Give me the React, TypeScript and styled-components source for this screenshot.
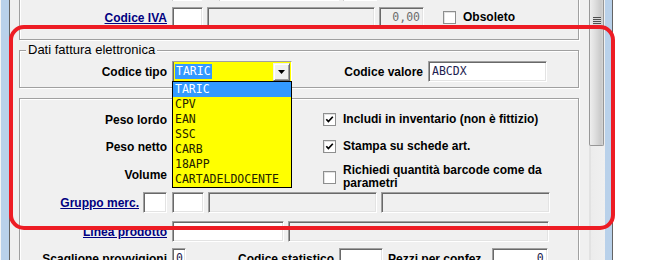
import React from "react";
import styled, { createGlobalStyle } from "styled-components";

const GlobalStyle = createGlobalStyle`
  html, body {
    margin: 0;
    padding: 0;
    background: #fff;
  }
  body {
    font-family: "Liberation Sans", Arial, sans-serif;
  }
`;

const mono = `"DejaVu Sans Mono", "Liberation Mono", monospace`;

const Screen = styled.div`
  position: relative;
  display: flex;
  width: 667px;
  height: 260px;
  overflow: hidden;
  background: #fff;
`;

const WindowEdge = styled.div`
  flex: 0 0 10px;
  box-sizing: border-box;
  background: #b9d1ea;
  border-left: 1px solid #f4f4f4;
  border-right: 1px solid #646464;
`;

const FormArea = styled.div`
  flex: 0 0 579px;
  box-sizing: border-box;
  padding: 0 10px 0 9px;
  background: #f0f0f0;
  display: flex;
  flex-direction: column;
  overflow: hidden;
`;

const GroupBox = styled.fieldset<{ $mt: number; $pt: number; $pb: number }>`
  flex-shrink: 0;
  min-width: 0;
  margin: ${(p) => p.$mt}px 0 0;
  padding: ${(p) => p.$pt}px 0 ${(p) => p.$pb}px;
  border: 1px solid #a0a0a0;
  box-shadow: inset 1px 1px 0 #fff, 1px 1px 0 #fff;
  display: flex;
  flex-direction: column;
  gap: 6px;
`;

const Legend = styled.legend`
  margin-left: 6px;
  padding: 0 2px;
  font-size: 13px;
  line-height: 14px;
  color: #000;
  background: #f0f0f0;
`;

const Row = styled.div<{ $h?: number; $gap?: number; $mb?: number }>`
  flex-shrink: 0;
  display: flex;
  align-items: center;
  height: ${(p) => p.$h ?? 21}px;
  gap: ${(p) => p.$gap ?? 5}px;
  margin-bottom: ${(p) => p.$mb ?? 0}px;
`;

const LabelCell = styled.div<{ $w?: number }>`
  flex: 0 0 ${(p) => p.$w ?? 147}px;
  display: flex;
  justify-content: flex-end;
  align-items: center;
  gap: 4px;
  font-size: 12px;
  font-weight: bold;
  color: #000;
  white-space: nowrap;
`;

const LinkLabel = styled.span`
  color: #000080;
  text-decoration: underline;
`;

const FieldGroup = styled.div`
  display: flex;
  align-items: center;
  gap: 4px;
`;

const FieldSlot = styled.div`
  flex: 0 0 146px;
  display: flex;
  align-items: center;
`;

const EditBox = styled.div<{ $w: number; $off?: boolean; $right?: boolean; $ml?: number }>`
  box-sizing: border-box;
  flex: 0 0 ${(p) => p.$w}px;
  width: ${(p) => p.$w}px;
  height: 21px;
  margin-left: ${(p) => p.$ml ?? 0}px;
  padding: 0 3px;
  border: 1px solid;
  border-color: #a0a0a0 #fff #fff #a0a0a0;
  box-shadow: inset 1px 1px 0 #696969, inset -1px -1px 0 #e3e3e3;
  background: ${(p) => (p.$off ? "#f0f0f0" : "#fff")};
  color: ${(p) => (p.$off ? "#6d6d6d" : "#1e1e50")};
  font: 11.5px/19px ${mono};
  text-align: ${(p) => (p.$right ? "right" : "left")};
  white-space: nowrap;
  overflow: hidden;
`;

const CheckItem = styled.div<{ $ml?: number; $top?: boolean }>`
  display: flex;
  align-items: center;
  gap: 7px;
  margin-left: ${(p) => p.$ml ?? 0}px;
  align-self: ${(p) => (p.$top ? "flex-start" : "center")};
  margin-top: ${(p) => (p.$top ? 1 : 0)}px;
`;

const CheckBox = styled.span`
  flex: 0 0 13px;
  width: 13px;
  height: 13px;
  box-sizing: border-box;
  border: 1px solid #8e8f8f;
  box-shadow: inset 1px 1px 0 #e2e2e2;
  background: #fff;
  display: flex;
  align-items: center;
  justify-content: center;
`;

const CheckText = styled.span`
  font-size: 12px;
  line-height: 13px;
  font-weight: bold;
  color: #000;
  white-space: nowrap;
`;

const Combo = styled.div`
  position: relative;
  flex: 0 0 120px;
  box-sizing: border-box;
  height: 21px;
  padding: 0 1px 0 2px;
  border: 1px solid;
  border-color: #a0a0a0 #fff #fff #a0a0a0;
  box-shadow: inset 1px 0 0 #696969;
  background: #ffff00;
  display: flex;
  align-items: center;
`;

const ComboValue = styled.span`
  padding: 0 1px;
  background: #3399ff;
  color: #fff;
  font: 11.5px/15px ${mono};
`;

const ComboButton = styled.div`
  margin-left: auto;
  width: 17px;
  height: 18px;
  box-sizing: border-box;
  background: #f0f0f0;
  border: 1px solid;
  border-color: #f0f0f0 #696969 #696969 #f0f0f0;
  box-shadow: inset 1px 1px 0 #fff, inset -1px -1px 0 #a0a0a0;
  display: flex;
  align-items: center;
  justify-content: center;
`;

const DropList = styled.ul`
  position: absolute;
  top: 100%;
  left: -1px;
  z-index: 3;
  width: 120px;
  box-sizing: border-box;
  margin: 0;
  padding: 0;
  list-style: none;
  border: 1px solid #000;
  background: #ffff00;
`;

const DropItem = styled.li<{ $active?: boolean }>`
  height: 15px;
  padding-left: 2px;
  font: 11.5px/15px ${mono};
  color: ${(p) => (p.$active ? "#fff" : "#222200")};
  background: ${(p) => (p.$active ? "#3399ff" : "transparent")};
  white-space: nowrap;
`;

const ScrollBar = styled.div`
  flex: 0 0 16px;
  display: flex;
  flex-direction: column;
  background: linear-gradient(90deg, #e2e2e2 0, #e2e2e2 2px, #ececec 2px, #f0f0f0 100%);
`;

const Thumb = styled.div`
  width: 15px;
  height: 146px;
  box-sizing: border-box;
  padding-top: 17px;
  border: 1px solid #979797;
  border-top: none;
  border-radius: 0 0 2px 2px;
  background: linear-gradient(90deg, #eeeeee 0%, #dedede 40%, #c9c9c9 85%, #d6d6d6 100%);
  display: flex;
  justify-content: center;
`;

const Grip = styled.div`
  width: 8px;
  height: 8px;
  background: repeating-linear-gradient(180deg, #4f4f4f 0 1px, #dadada 1px 2px);
`;

const BlueStrip = styled.div`
  flex: 0 0 8px;
  box-sizing: border-box;
  background: #b9d1ea;
  border-right: 1px solid #646464;
`;

const Desktop = styled.div`
  flex: 1;
  background: #fff;
`;

const RedMark = styled.div`
  position: absolute;
  left: 9px;
  top: 25px;
  width: 606px;
  height: 205px;
  box-sizing: border-box;
  border: 4px solid #ed1c24;
  border-radius: 15px;
  pointer-events: none;
  z-index: 10;
`;

const CheckMark = () => (
  <svg width="9" height="9" viewBox="0 0 9 9">
    <path d="M1.3 4.3 L3.4 6.6 L7.8 1.8" fill="none" stroke="#000" strokeWidth="1.7" />
  </svg>
);

const Check = ({ checked }: { checked?: boolean }) => (
  <CheckBox>{checked && <CheckMark />}</CheckBox>
);

const DropArrow = () => (
  <svg width="7" height="4" viewBox="0 0 7 4">
    <path d="M0 0 H7 L3.5 4 Z" fill="#000" />
  </svg>
);

const codes = ["TARIC", "CPV", "EAN", "SSC", "CARB", "18APP", "CARTADELDOCENTE"];

export default function App() {
  return (
    <Screen>
      <GlobalStyle />
      <WindowEdge />
      <FormArea>
        <GroupBox $mt={-31} $pt={10} $pb={11}>
          <Row>
            <LabelCell />
            <FieldGroup>
              <EditBox $w={30} />
              <EditBox $w={120} $off $ml={13} />
              <EditBox $w={34} />
            </FieldGroup>
          </Row>
          <Row>
            <LabelCell>
              <LinkLabel>Codice IVA</LinkLabel>
            </LabelCell>
            <FieldGroup>
              <EditBox $w={31} />
              <EditBox $w={168} $off />
              <EditBox $w={45} $off $right>
                0,00
              </EditBox>
            </FieldGroup>
            <CheckItem $ml={14}>
              <Check />
              <CheckText>Obsoleto</CheckText>
            </CheckItem>
          </Row>
        </GroupBox>

        <GroupBox $mt={3} $pt={4} $pb={5}>
          <Legend>Dati fattura elettronica</Legend>
          <Row>
            <LabelCell>Codice tipo</LabelCell>
            <Combo>
              <ComboValue>TARIC</ComboValue>
              <ComboButton>
                <DropArrow />
              </ComboButton>
              <DropList>
                {codes.map((c, i) => (
                  <DropItem key={c} $active={i === 0}>
                    {c}
                  </DropItem>
                ))}
              </DropList>
            </Combo>
            <LabelCell $w={126}>Codice valore</LabelCell>
            <EditBox $w={119}>ABCDX</EditBox>
          </Row>
        </GroupBox>

        <GroupBox $mt={10} $pt={10} $pb={10}>
          <Row>
            <LabelCell>Peso lordo</LabelCell>
            <FieldSlot>
              <EditBox $w={80} />
            </FieldSlot>
            <CheckItem>
              <Check checked />
              <CheckText>Includi in inventario (non è fittizio)</CheckText>
            </CheckItem>
          </Row>
          <Row>
            <LabelCell>Peso netto</LabelCell>
            <FieldSlot>
              <EditBox $w={80} />
            </FieldSlot>
            <CheckItem>
              <Check checked />
              <CheckText>Stampa su schede art.</CheckText>
            </CheckItem>
          </Row>
          <Row $h={23}>
            <LabelCell>Volume</LabelCell>
            <FieldSlot>
              <EditBox $w={80} />
            </FieldSlot>
            <CheckItem $top>
              <Check />
              <CheckText>
                Richiedi quantità barcode come da
                <br />
                parametri
              </CheckText>
            </CheckItem>
          </Row>
          <Row $mb={2}>
            <LabelCell>
              <LinkLabel>Gruppo merc.</LinkLabel>
              <EditBox $w={24} />
            </LabelCell>
            <FieldGroup>
              <EditBox $w={32} />
              <EditBox $w={169} $off />
              <EditBox $w={169} $off />
            </FieldGroup>
          </Row>
          <Row>
            <LabelCell>
              <LinkLabel>Linea prodotto</LinkLabel>
            </LabelCell>
            <FieldGroup>
              <EditBox $w={112} />
              <EditBox $w={261} $off />
            </FieldGroup>
          </Row>
          <Row>
            <LabelCell>Scaglione provvigioni</LabelCell>
            <EditBox $w={14}>0</EditBox>
            <LabelCell $w={143}>Codice statistico</LabelCell>
            <EditBox $w={44} />
            <LabelCell $w={96}>Pezzi per confez.</LabelCell>
            <EditBox $w={56} $ml={2} $right>
              0
            </EditBox>
          </Row>
        </GroupBox>
      </FormArea>
      <ScrollBar>
        <Thumb>
          <Grip />
        </Thumb>
      </ScrollBar>
      <BlueStrip />
      <Desktop />
      <RedMark />
    </Screen>
  );
}
